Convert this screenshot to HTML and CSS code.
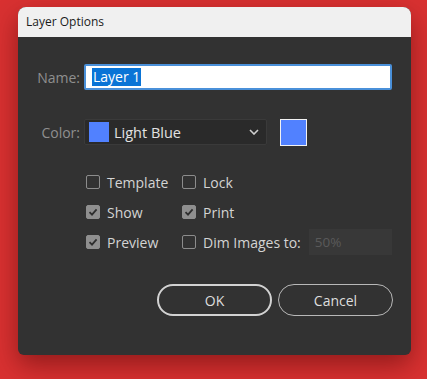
FILE: index.html
```html
<!DOCTYPE html>
<html>
<head>
  <title>Layer Options</title>
  <link rel="stylesheet" href="styles.css">
</head>
<body>
  <div class="dialog">
    <div class="titlebar">Layer Options</div>

    <div class="dialog-body">
      <div class="field-row">
        <label class="field-label">Name:</label>
        <div class="name-input"><span class="selected">Layer 1</span></div>
      </div>

      <div class="field-row color-row">
        <label class="field-label">Color:</label>
        <div class="color-select">
          <span class="swatch-small"></span>
          <span class="select-text">Light Blue</span>
          <svg class="chevron" width="10" height="6" viewBox="0 0 10 6">
            <path d="M1 1 L5 5 L9 1" fill="none" stroke="#cfcfcf" stroke-width="1.6"/>
          </svg>
        </div>
        <div class="swatch-big"></div>
      </div>

      <div class="checks">
        <div class="check"><span class="box"></span>Template</div>
        <div class="check"><span class="box"></span>Lock</div>

        <div class="check"><span class="box checked"><svg width="14" height="14" viewBox="0 0 14 14"><path d="M3.5 7.2 L6 9.6 L10.6 4.4" fill="none" stroke="#2e2e2e" stroke-width="1.8"/></svg></span>Show</div>
        <div class="check"><span class="box checked"><svg width="14" height="14" viewBox="0 0 14 14"><path d="M3.5 7.2 L6 9.6 L10.6 4.4" fill="none" stroke="#2e2e2e" stroke-width="1.8"/></svg></span>Print</div>

        <div class="check"><span class="box checked"><svg width="14" height="14" viewBox="0 0 14 14"><path d="M3.5 7.2 L6 9.6 L10.6 4.4" fill="none" stroke="#2e2e2e" stroke-width="1.8"/></svg></span>Preview</div>
        <div class="check"><span class="box"></span>Dim Images to:<span class="dim-input">50%</span></div>
      </div>

      <div class="buttons">
        <button class="btn btn-default">OK</button>
        <button class="btn">Cancel</button>
      </div>
    </div>
  </div>
</body>
</html>
```

FILE: styles.css
```css
body {
  margin: 0;
  width: 427px;
  height: 379px;
  overflow: hidden;
  background: #d93131;
  font-family: 'Open Sans', 'Noto Sans', sans-serif;
  padding-top: 7px;
  box-sizing: border-box;
}

.dialog {
  margin-left: 18px;
  width: 393px;
  height: 348px;
  background: #323232;
  border-radius: 8px 8px 6px 6px;
  overflow: hidden;
  box-shadow: 0 10px 26px rgba(60, 0, 0, 0.45);
  display: flex;
  flex-direction: column;
}

.titlebar {
  height: 30px;
  background: #f0f0f0;
  color: #1b1b1b;
  font-size: 12px;
  line-height: 30px;
  padding-left: 8px;
}

.dialog-body {
  padding: 27px 18px 0 18px;
  display: flex;
  flex-direction: column;
}

.field-row {
  display: flex;
  align-items: center;
  height: 26px;
}

.field-label {
  width: 44px;
  text-align: right;
  color: #8f8f8f;
  font-size: 14px;
  margin-right: 4px;
}

.name-input {
  flex: 1;
  height: 26px;
  box-sizing: border-box;
  margin-right: 1px;
  background: #fff;
  border: 2px solid #4a90d9;
  border-radius: 2px;
  display: flex;
  align-items: center;
  padding-left: 6px;
  font-size: 14px;
}

.selected {
  background: #0a74d6;
  color: #fff;
  line-height: 18px;
  padding: 0 1px;
}

.color-row {
  margin-top: 29px;
}

.color-select {
  width: 183px;
  height: 26px;
  box-sizing: border-box;
  background: #2a2a2a;
  border: 1px solid #3a3a3a;
  border-radius: 2px;
  display: flex;
  align-items: center;
  padding-left: 4px;
  padding-right: 6px;
}

.swatch-small {
  width: 20px;
  height: 20px;
  background: #5181ff;
  margin-right: 5px;
}

.select-text {
  flex: 1;
  color: #e2e2e2;
  font-size: 14.5px;
}

.chevron {
  margin-right: 1px;
}

.swatch-big {
  width: 27px;
  height: 27px;
  box-sizing: border-box;
  background: #5181ff;
  border: 1px solid #f2f2f2;
  margin-left: 13px;
}

.checks {
  margin-top: 22px;
  margin-left: 50px;
  margin-right: 1px;
  display: grid;
  grid-template-columns: 96px 1fr;
  grid-auto-rows: 30px;
}

.check {
  display: flex;
  align-items: center;
  color: #d4d4d4;
  font-size: 14px;
}

.box {
  width: 14px;
  height: 14px;
  box-sizing: border-box;
  border: 1px solid #8c8c8c;
  border-radius: 2px;
  margin-right: 7px;
  flex-shrink: 0;
}

.box.checked {
  background: #8f8f8f;
  border-color: #8f8f8f;
  position: relative;
}

.box.checked svg {
  position: absolute;
  left: -1px;
  top: -1px;
}

.dim-input {
  flex: 1;
  height: 26px;
  box-sizing: border-box;
  margin-left: 8px;
  background: #383838;
  color: #5a5a5a;
  font-size: 13.5px;
  line-height: 26px;
  padding-left: 6px;
}

.buttons {
  margin-top: 27px;
  display: flex;
  justify-content: flex-end;
  gap: 6px;
}

.btn {
  width: 115px;
  height: 32px;
  border-radius: 16px;
  background: transparent;
  border: 1px solid #b8b8b8;
  color: #dedede;
  font-family: inherit;
  font-size: 14px;
}

.btn-default {
  border: 2px solid #d2d2d2;
}
```
